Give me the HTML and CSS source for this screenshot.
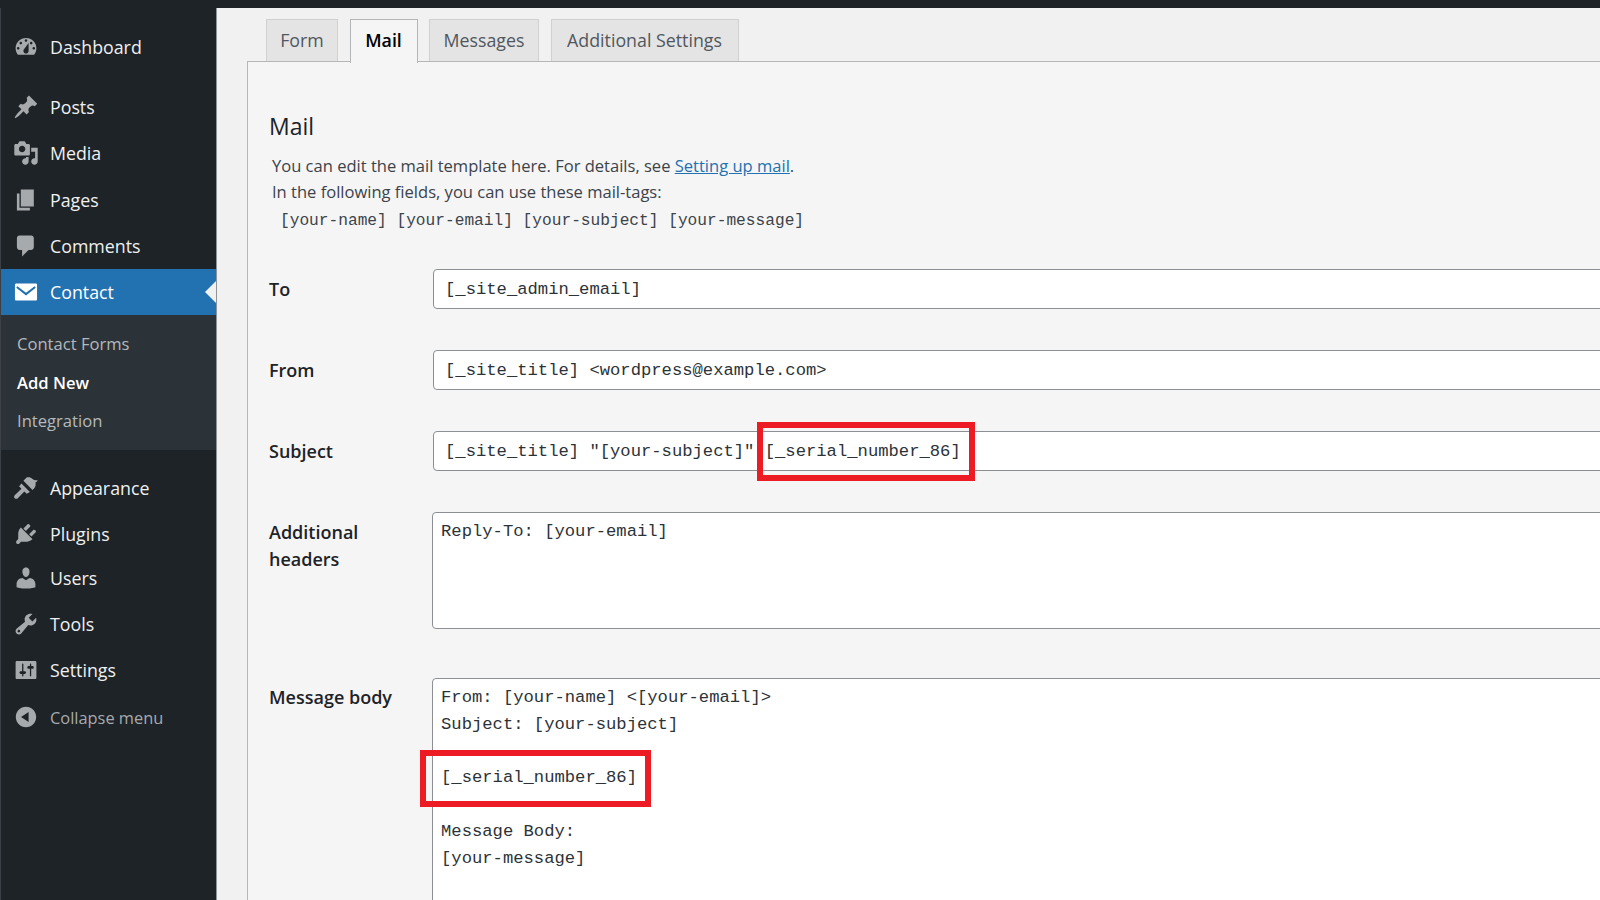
FILE: index.html
```html
<!DOCTYPE html>
<html lang="en">
<head>
<meta charset="utf-8">
<title>Contact Form - Mail</title>
<link rel="stylesheet" href="styles.css">
</head>
<body>
<div class="topbar"></div>
<div class="app">
  <nav class="sidebar">
    <a class="item first"><svg class="icon" viewBox="0 0 20 20"><path fill-rule="evenodd" d="M3.76 16h12.48c1.1-1.37 1.76-3.11 1.76-5 0-4.42-3.58-8-8-8s-8 3.58-8 8c0 1.89.66 3.63 1.76 5zM10 4c.55 0 1 .45 1 1s-.45 1-1 1-1-.45-1-1 .45-1 1-1zM6 6c.55 0 1 .45 1 1s-.45 1-1 1-1-.45-1-1 .45-1 1-1zm8 0c.55 0 1 .45 1 1s-.45 1-1 1-1-.45-1-1 .45-1 1-1zm-5.37 5.55L12 7v6c0 1.1-.9 2-2 2s-2-.9-2-2c0-.57.24-1.08.63-1.45zM4 10c.55 0 1 .45 1 1s-.45 1-1 1-1-.45-1-1 .45-1 1-1zm12 0c.55 0 1 .45 1 1s-.45 1-1 1-1-.45-1-1 .45-1 1-1z"/></svg>Dashboard</a>
    <a class="item"><svg class="icon" viewBox="0 0 20 20"><path d="M10.44 3.02l1.82-1.82 6.36 6.35-1.83 1.82c-1.05-.68-2.48-.57-3.41.36l-.75.75c-.92.93-1.04 2.35-.35 3.41l-1.83 1.82-2.41-2.41-2.8 2.79c-.42.42-3.38 2.71-3.8 2.29s1.86-3.39 2.28-3.81l2.79-2.79L4.1 9.36l1.83-1.82c1.05.69 2.48.57 3.4-.36l.75-.75c.93-.92 1.05-2.35.36-3.41z"/></svg>Posts</a>
    <a class="item"><svg class="icon" viewBox="0 0 20 20"><path fill-rule="evenodd" d="M13 11V4c0-.55-.45-1-1-1h-1.67L9 1H5L3.67 3H2c-.55 0-1 .45-1 1v7c0 .55.45 1 1 1h10c.55 0 1-.45 1-1zM7 4.5c1.38 0 2.5 1.12 2.5 2.5S8.38 9.5 7 9.5 4.5 8.38 4.5 7 5.62 4.5 7 4.5zM14 6h5v10.5c0 1.38-1.12 2.5-2.5 2.5S14 17.88 14 16.5s1.12-2.5 2.5-2.5c.17 0 .34.02.5.05V9h-3V6zm-4 8.05V13h2v3.5c0 1.38-1.12 2.5-2.5 2.5S7 17.88 7 16.5 8.12 14 9.5 14c.17 0 .34.02.5.05z"/></svg>Media</a>
    <a class="item pages"><svg class="icon" viewBox="0 0 20 20"><path d="M6 15V2h10v13H6zm-1 1h8v2H3V5h2v11z"/></svg>Pages</a>
    <a class="item"><svg class="icon" viewBox="0 0 20 20"><path d="M5 2h9c1.1 0 2 .9 2 2v7c0 1.1-.9 2-2 2h-2l-5 5v-5H5c-1.1 0-2-.9-2-2V4c0-1.1.9-2 2-2z"/></svg>Comments</a>
    <a class="item current"><svg class="icon" viewBox="0 0 20 20"><path fill-rule="evenodd" d="M2.5 3.500h15c.55 0 1 .45 1 1v11c0 .55-.45 1-1 1h-15c-.55 0-1-.45-1-1v-11c0-.55.45-1 1-1zM3.400 5.600L10 10.600l6.600-5 .9 1.200L10 12.600 2.500 6.800z"/></svg>Contact</a>
    <div class="submenu">
      <a class="subitem">Contact Forms</a>
      <a class="subitem active">Add New</a>
      <a class="subitem">Integration</a>
    </div>
    <a class="item"><svg class="icon" viewBox="0 0 20 20"><path d="M8 4.500L10.500 2C12 1.500 14 2 15 3c.8.8 2.500 1.200 4 1-.5 1-1 1.500-1.800 1.800.4 1.200.4 2.800-.7 4.200L15 11.500z"/><path d="M6.500 6.500l6.500 6.500-2.500 1.500-1.800-1.800-5 5.200c-.7.600-1.800.600-2.400 0-.6-.7-.6-1.700 0-2.400l5.200-5-1.800-1.800z"/></svg>Appearance</a>
    <a class="item"><svg class="icon" viewBox="0 0 20 20"><path d="M13.110 4.360L9.870 7.600 8 5.730l3.240-3.240c.35-.34 1.050-.2 1.560.32.52.51.66 1.210.31 1.550zm-8 1.770l.91-1.120 9.010 9.010-1.190.84c-.71.71-2.630 1.160-3.820 1.160H6.140L4.900 17.260c-.59.59-1.540.59-2.120 0-.59-.58-.59-1.530 0-2.120l1.240-1.240v-3.880c0-1.130.4-3.190 1.090-3.890zm7.260 3.970l3.240-3.240c.34-.35 1.040-.21 1.550.31.52.51.66 1.210.31 1.550l-3.240 3.250z"/></svg>Plugins</a>
    <a class="item tight"><svg class="icon" viewBox="0 0 20 20"><path d="M10 9.250c-2.270 0-2.730-3.440-2.730-3.440C7 4.020 7.820 2 9.970 2c2.160 0 2.980 2.020 2.710 3.810 0 0-.41 3.440-2.680 3.440zm0 2.570L12.720 10c2.390 0 4.520 2.330 4.520 4.530v2.490s-3.650 1.130-7.240 1.130c-3.650 0-7.240-1.130-7.240-1.130v-2.490c0-2.250 1.940-4.480 4.470-4.480z"/></svg>Users</a>
    <a class="item"><svg class="icon" viewBox="0 0 20 20"><path fill-rule="evenodd" d="M16.680 9.770c-1.340 1.340-3.300 1.670-4.950.99l-5.410 6.520c-.99.99-2.590.99-3.580 0s-.99-2.590 0-3.570l6.520-5.420c-.68-1.650-.35-3.610.99-4.950 1.280-1.280 3.120-1.620 4.720-1.060l-2.890 2.890 2.820 2.820 2.860-2.870c.53 1.580.18 3.390-1.080 4.650zM3.810 16.210c.4.39 1.040.39 1.430 0 .4-.4.4-1.040 0-1.430-.39-.4-1.030-.4-1.430 0-.39.39-.39 1.030 0 1.430z"/></svg>Tools</a>
    <a class="item"><svg class="icon" viewBox="0 0 20 20"><path fill-rule="evenodd" d="M18 16V4c0-.55-.45-1-1-1H3c-.55 0-1 .45-1 1v12c0 .55.45 1 1 1h14c.55 0 1-.45 1-1zM8 11h1c.55 0 1 .45 1 1s-.45 1-1 1H8v1.500c0 .28-.22.5-.5.5s-.5-.22-.5-.5V13H6c-.55 0-1-.45-1-1s.45-1 1-1h1V5.500c0-.28.22-.5.5-.5s.5.22.5.5V11zm5-2h-1c-.55 0-1-.45-1-1s.45-1 1-1h1V5.500c0-.28.22-.5.5-.5s.5.22.5.5V7h1c.55 0 1 .45 1 1s-.45 1-1 1h-1v5.500c0 .28-.22.5-.5.5s-.5-.22-.5-.5V9z"/></svg>Settings</a>
    <a class="item collapse"><svg class="icon" viewBox="0 0 20 20"><path fill-rule="evenodd" d="M10 2.160c4.330 0 7.840 3.510 7.840 7.840s-3.510 7.840-7.840 7.840S2.160 14.330 2.160 10 5.710 2.160 10 2.160zm2 11.720V6.120L6.180 9.970z"/></svg>Collapse menu</a>
  </nav>
  <main class="main">
    <ul class="tabs">
      <li class="tab">Form</li>
      <li class="tab selected">Mail</li>
      <li class="tab">Messages</li>
      <li class="tab">Additional Settings</li>
    </ul>
    <section class="panel">
      <h2 class="title">Mail</h2>
      <p class="intro">You can edit the mail template here. For details, see <a class="link">Setting up mail</a>.</p>
      <p class="intro">In the following fields, you can use these mail-tags:</p>
      <p class="tags">[your-name] [your-email] [your-subject] [your-message]</p>
      <div class="form">
        <label class="label">To</label>
        <div class="field"><div class="input">[_site_admin_email]</div></div>
        <label class="label">From</label>
        <div class="field"><div class="input">[_site_title] &lt;wordpress@example.com&gt;</div></div>
        <label class="label">Subject</label>
        <div class="field"><div class="input">[_site_title] "[your-subject]" [_serial_number_86]</div><div class="mark mark-subject"></div></div>
        <label class="label label-area">Additional<br>headers</label>
        <div class="field"><div class="area area-short">Reply-To: [your-email]</div></div>
        <label class="label label-area row-body">Message body</label>
        <div class="field row-body"><div class="area area-tall">From: [your-name] &lt;[your-email]&gt;
Subject: [your-subject]

[_serial_number_86]

Message Body:
[your-message]</div><div class="mark mark-body"></div></div>
      </div>
    </section>
  </main>
</div>
</body>
</html>
```
FILE: styles.css
```css
* { box-sizing: border-box; }
html, body { margin: 0; height: 100%; overflow: hidden; }
body {
  width: 1600px;
  height: 900px;
  display: flex;
  flex-direction: column;
  background: #f1f1f1;
  font-family: "Open Sans", "Noto Sans", sans-serif;
  color: #2c3338;
}
.topbar { height: 8px; flex: none; background: #1d2327; }
.app { flex: 1; display: flex; min-height: 0; }

.sidebar {
  width: 217px;
  flex: none;
  padding-top: 16px;
  background: #1d2327;
  border-left: 1px solid #3a4045;
  border-right: 1px solid #8f9296;
}
.item {
  height: 46px;
  display: flex;
  align-items: center;
  gap: 11px;
  padding-left: 12px;
  font-size: 17.800px;
  color: #f0f0f1;
  position: relative;
}
.first { margin-bottom: 14px; }
.pages { margin-top: 1px; }
.tight { margin-top: -2px; }
.icon { width: 26px; height: 26px; flex: none; fill: #a7aaad; }
.current { height: 46px; background: #2271b1; color: #fff; }
.current .icon { fill: #fff; }
.current::after {
  content: "";
  position: absolute;
  right: 0;
  top: 12px;
  border: 11px solid transparent;
  border-right-color: #f1f1f1;
  border-left-width: 0;
}
.submenu { height: 135px; padding-top: 10px; background: #2c3338; margin-bottom: 15px; }
.subitem {
  display: block;
  height: 38.500px;
  line-height: 38px;
  padding-left: 16px;
  font-size: 16.600px;
  color: #b4b9be;
}
.subitem.active { color: #fff; font-weight: 600; }
.collapse { margin-top: 1px; color: #a7aaad; font-size: 16.400px; }

.main { flex: 1; min-width: 0; padding: 11px 0 0 30px; }
.tabs {
  display: grid;
  grid-template-columns: 72px 68px 110px 188px;
  column-gap: 11.500px;
  margin: 0;
  padding: 0 0 0 19px;
  list-style: none;
  height: 42px;
}
.tab {
  height: 42px;
  line-height: 41px;
  text-align: center;
  font-size: 17.800px;
  color: #50575e;
  background: #e4e4e4;
  border: 1.500px solid #d0d0d0;
  border-bottom: none;
}
.tab.selected {
  height: 44px;
  position: relative;
  z-index: 1;
  color: #000;
  font-weight: 600;
  background: #f5f5f5;
  border-color: #b4b6b8;
}
.panel {
  width: 1400px;
  height: 900px;
  padding: 48px 0 0 21px;
  background: #f5f5f5;
  border: 1.500px solid #b4b6b8;
  border-right: none;
}
.title {
  margin: 0 0 11px;
  font-size: 23px;
  font-weight: 400;
  line-height: 32px;
  color: #1d2327;
}
.intro {
  margin: 0 0 0 3px;
  font-size: 16.550px;
  line-height: 26px;
  color: #3c434a;
}
.link { color: #2271b1; text-decoration: underline; }
.tags {
  margin: 2px 0 0 11px;
  font-family: "Liberation Mono", monospace;
  font-size: 16.180px;
  line-height: 28px;
  color: #3c434a;
}
.form {
  margin-top: 34px;
  display: grid;
  grid-template-columns: 164px 1fr;
  row-gap: 41px;
}
.label {
  padding-top: 7px;
  font-size: 18px;
  font-weight: 600;
  line-height: 27px;
  color: #1d2327;
}
.row-body { margin-top: 8px; }
.row-body.label { padding-top: 6px; }
.field { position: relative; }
.input {
  height: 40px;
  padding: 0 11px;
  line-height: 39px;
  font-family: "Liberation Mono", monospace;
  font-size: 17.200px;
  color: #2c3338;
  background: #fff;
  border: 1.500px solid #8c8f94;
  border-radius: 4px;
  white-space: pre;
}
.area {
  padding: 6px 8px;
  font-family: "Liberation Mono", monospace;
  font-size: 17.200px;
  line-height: 26.800px;
  color: #2c3338;
  background: #fff;
  border: 1.500px solid #8c8f94;
  border-radius: 4px;
  white-space: pre;
}
.area-short { height: 117px; margin-left: -1px; }
.area-tall { height: 320px; margin-left: -1px; }
.mark { position: absolute; border: 6px solid #ed1c24; }
.mark-subject { left: 324px; top: -9px; width: 218px; height: 59px; }
.mark-body { left: -13px; top: 72px; width: 231px; height: 57px; }
```
